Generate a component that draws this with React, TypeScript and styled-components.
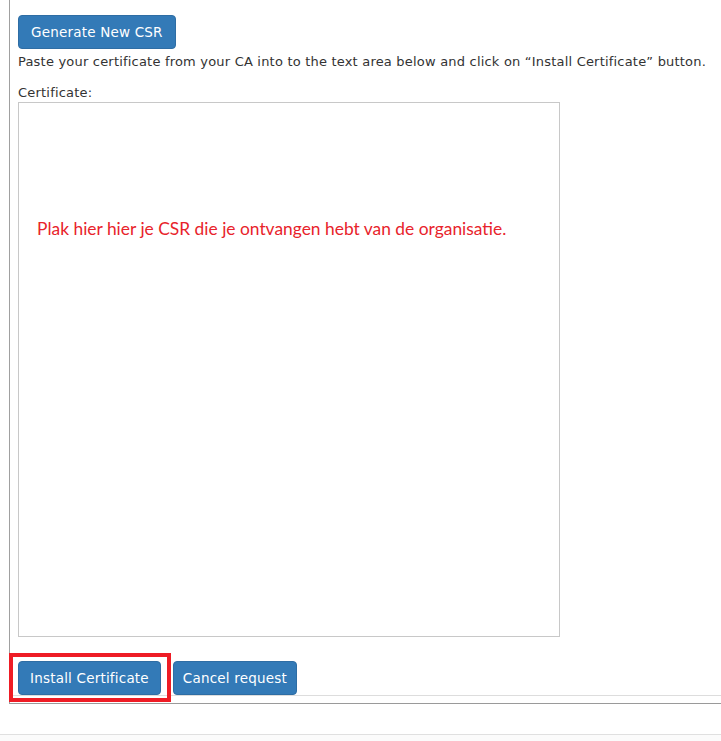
import styled, { createGlobalStyle } from "styled-components";

const GlobalStyle = createGlobalStyle`
  html, body {
    margin: 0;
    padding: 0;
    background: #ffffff;
  }
  body {
    font-family: "DejaVu Sans", Verdana, sans-serif;
    font-size: 13px;
    letter-spacing: 0.2px;
    color: #333333;
  }
`;

const StyledPage = styled.div`
  width: 721px;
  height: 741px;
  overflow: hidden;
  display: flex;
  flex-direction: column;
`;

const StyledPanel = styled.div`
  margin-left: 9px;
  height: 704px;
  box-sizing: border-box;
  border-left: 1px solid #a0a0a0;
  border-bottom: 1px solid #9a9a9a;
  padding-top: 15px;
  display: flex;
  flex-direction: column;
`;

const StyledContent = styled.div`
  padding-left: 8px;
  display: flex;
  flex-direction: column;
  align-items: flex-start;
`;

const StyledButton = styled.button<{ $pad?: number }>`
  height: 34px;
  padding: 0 ${(p) => p.$pad ?? 12}px;
  border: 1px solid #2e6da4;
  border-radius: 4px;
  background: #337ab7;
  color: #ffffff;
  font-family: "DejaVu Sans", Verdana, sans-serif;
  font-size: 13.5px;
  letter-spacing: 0.2px;
  cursor: pointer;
`;

const StyledHelp = styled.p`
  margin: 5px 0 0;
  line-height: 16px;
  white-space: nowrap;
`;

const StyledLabel = styled.label`
  margin-top: 15px;
  line-height: 16px;
`;

const StyledFieldWrap = styled.div`
  position: relative;
  margin-top: 1px;
`;

const StyledTextArea = styled.textarea`
  display: block;
  width: 542px;
  height: 535px;
  box-sizing: border-box;
  border: 1px solid #c8c8c8;
  resize: none;
  outline: none;
`;

// annotation written over the empty field
const StyledNote = styled.span`
  position: absolute;
  left: 19px;
  top: 116px;
  color: #e8232b;
  font-family: Lato, "Open Sans", sans-serif;
  font-size: 17.4px;
  letter-spacing: 0;
  pointer-events: none;
  white-space: nowrap;
`;

const StyledFooter = styled.div`
  margin-top: 24px;
  padding-left: 8px;
  display: flex;
  gap: 12px;
  border-bottom: 1px solid #dddddd;
`;

const StyledHighlight = styled.div`
  position: relative;
  &::after {
    content: "";
    position: absolute;
    left: -9px;
    right: -10px;
    top: -8px;
    bottom: -7px;
    border: 4px solid #ee1c25;
    pointer-events: none;
  }
`;

const StyledFootBar = styled.div`
  margin-top: 30px;
  border-top: 1px solid #e0e0e0;
  flex: 1;
  background: #fbfbfb;
`;

export default function App() {
  return (
    <StyledPage>
      <GlobalStyle />
      <StyledPanel>
        <StyledContent>
          <StyledButton>Generate New CSR</StyledButton>
          <StyledHelp>
            Paste your certificate from your CA into to the text area below and click on “Install Certificate” button.
          </StyledHelp>
          <StyledLabel>Certificate:</StyledLabel>
          <StyledFieldWrap>
            <StyledTextArea />
            <StyledNote>Plak hier hier je CSR die je ontvangen hebt van de organisatie.</StyledNote>
          </StyledFieldWrap>
        </StyledContent>
        <StyledFooter>
          <StyledHighlight>
            <StyledButton $pad={11}>Install Certificate</StyledButton>
          </StyledHighlight>
          <StyledButton $pad={9}>Cancel request</StyledButton>
        </StyledFooter>
      </StyledPanel>
      <StyledFootBar />
    </StyledPage>
  );
}
